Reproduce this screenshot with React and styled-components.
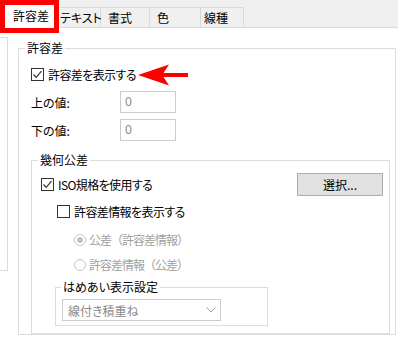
import React from "react";
import styled, { createGlobalStyle } from "styled-components";

const GlobalStyle = createGlobalStyle`
  html, body {
    margin: 0;
    padding: 0;
    background: #ffffff;
  }
  body {
    font-family: "Noto Sans CJK JP", "Noto Sans", sans-serif;
    font-size: 12px;
    font-feature-settings: "palt";
    color: #000000;
  }
`;

const Window = styled.div`
  width: 398px;
  height: 337px;
  overflow: hidden;
  background: #ffffff;
`;

const TabBar = styled.div`
  display: flex;
  align-items: flex-start;
  height: 27px;
  background: #f0f0f0;
  border-bottom: 1px solid #d9d9d9;
`;

const Tab = styled.div`
  box-sizing: border-box;
  width: ${(p) => p.$w}px;
  height: 21px;
  margin-top: 7px;
  padding-left: ${(p) => p.$pad}px;
  border-top: 1px solid #d9d9d9;
  border-right: 1px solid #d9d9d9;
  line-height: 19px;
  white-space: nowrap;
`;

const ActiveTab = styled.div`
  position: relative;
  z-index: 2;
  box-sizing: border-box;
  width: 59px;
  height: 33px;
  padding-left: 8px;
  border: 5px solid #ff0000;
  background: #ffffff;
  line-height: 22px;
`;

const Content = styled.div`
  display: flex;
  align-items: flex-start;
  padding: 9px 2px 0 0;
`;

const SideBox = styled.div`
  box-sizing: border-box;
  flex: none;
  width: 8px;
  height: 234px;
  border: 1px solid #dcdcdc;
  border-left: none;
`;

const GroupBox = styled.section`
  box-sizing: border-box;
  flex: ${(p) => (p.$w ? "none" : "1")};
  width: ${(p) => (p.$w ? `${p.$w}px` : "auto")};
  margin: ${(p) => p.$mt || 0}px 0 0 ${(p) => p.$ml || 0}px;
`;

const GroupHead = styled.div`
  display: flex;
  height: 14px;
  line-height: 14px;

  &::before,
  &::after {
    content: "";
    box-sizing: border-box;
    align-self: flex-end;
    height: 7px;
    border-top: 1px solid #dcdcdc;
  }
  &::before {
    width: ${(p) => p.$lead}px;
    border-left: 1px solid #dcdcdc;
  }
  &::after {
    flex: 1;
    border-right: 1px solid #dcdcdc;
  }
`;

const GroupTitle = styled.span`
  padding: 0 2px;
  white-space: nowrap;
`;

const GroupBody = styled.div`
  padding: ${(p) => p.$pad};
  border: 1px solid #dcdcdc;
  border-top: none;
`;

const CheckRow = styled.label`
  display: flex;
  align-items: center;
  gap: 4px;
  height: 17px;
  margin-top: ${(p) => p.$mt || 0}px;
  margin-left: ${(p) => p.$indent || 0}px;
  line-height: 17px;
  letter-spacing: -0.6px;
  white-space: nowrap;
`;

const Box = styled.span`
  box-sizing: border-box;
  display: flex;
  align-items: center;
  justify-content: center;
  width: 13px;
  height: 13px;
  border: 1px solid #333333;
  background: #ffffff;
  flex: none;
`;

const Arrow = styled.svg`
  flex: none;
  margin-left: -2px;
  margin-top: 1px;
`;

const ValueRow = styled.div`
  display: flex;
  align-items: center;
  height: 22px;
  margin-top: ${(p) => p.$mt}px;
`;

const ValueLabel = styled.span`
  width: 89px;
`;

const ValueInput = styled.div`
  box-sizing: border-box;
  width: 56px;
  height: 22px;
  padding-left: 4px;
  border: 1px solid #cccccc;
  color: #8a8a8a;
  font-family: "Noto Sans", sans-serif;
  font-size: 12px;
  line-height: 20px;
`;

const SplitRow = styled.div`
  display: flex;
  align-items: center;
  justify-content: space-between;
  height: 23px;
`;

const Button = styled.button`
  box-sizing: border-box;
  width: 86px;
  height: 23px;
  padding: 0;
  border: 1px solid #adadad;
  background: #e1e1e1;
  color: #000000;
  font-family: inherit;
  font-size: 12px;
  font-feature-settings: "palt";
`;

const RadioRow = styled.div`
  display: flex;
  align-items: center;
  gap: 3px;
  height: 17px;
  margin-top: ${(p) => p.$mt}px;
  margin-left: 33px;
  color: #a0a0a0;
  font-feature-settings: normal;
  letter-spacing: -1px;
  white-space: nowrap;
`;

const Radio = styled.span`
  box-sizing: border-box;
  display: flex;
  align-items: center;
  justify-content: center;
  width: 12px;
  height: 12px;
  border: 1px solid #c4c4c4;
  border-radius: 50%;
  flex: none;

  &::after {
    content: "";
    display: ${(p) => (p.$on ? "block" : "none")};
    width: 6px;
    height: 6px;
    border-radius: 50%;
    background: #c4c4c4;
  }
`;

const Select = styled.div`
  box-sizing: border-box;
  display: flex;
  align-items: center;
  justify-content: space-between;
  width: 159px;
  height: 22px;
  padding: 0 4px 0 5px;
  border: 1px solid #cccccc;
  color: #8a8a8a;
`;

const Check = () => (
  <svg width="11" height="11" viewBox="0 0 11 11">
    <path d="M1.5 5.5 L4.2 8.3 L9.5 2.2" fill="none" stroke="#333" strokeWidth="1.2" />
  </svg>
);

const CheckBox = ({ checked }) => <Box>{checked && <Check />}</Box>;

const Group = ({ title, lead, w, mt, ml, pad, children }) => (
  <GroupBox $w={w} $mt={mt} $ml={ml}>
    <GroupHead $lead={lead}>
      <GroupTitle>{title}</GroupTitle>
    </GroupHead>
    <GroupBody $pad={pad}>{children}</GroupBody>
  </GroupBox>
);

const tabs = [
  { label: "テキスト", w: 42, pad: 1 },
  { label: "書式", w: 49, pad: 7 },
  { label: "色", w: 51, pad: 7 },
  { label: "線種", w: 43, pad: 3 },
];

const App = () => {
  return (
    <Window>
      <GlobalStyle />
      <TabBar>
        <ActiveTab>許容差</ActiveTab>
        {tabs.map((t) => (
          <Tab key={t.label} $w={t.w} $pad={t.pad}>
            {t.label}
          </Tab>
        ))}
      </TabBar>
      <Content>
        <SideBox />
        <Group title="許容差" lead={7} mt={4} ml={10} pad="11px 5px 0 12px">
          <CheckRow>
            <CheckBox checked />
            許容差を表示する
            <Arrow width="50" height="24" viewBox="0 0 50 24">
              <path d="M0 12 L31 1.5 L25.5 10 L50 10 L50 14 L25.5 14 L31 22.5 Z" fill="#ff0000" />
            </Arrow>
          </CheckRow>
          <ValueRow $mt={8}>
            <ValueLabel>上の値:</ValueLabel>
            <ValueInput>0</ValueInput>
          </ValueRow>
          <ValueRow $mt={6}>
            <ValueLabel>下の値:</ValueLabel>
            <ValueInput>0</ValueInput>
          </ValueRow>
          <Group title="幾何公差" lead={7} mt={12} pad="6px 6px 7px 9px">
            <SplitRow>
              <CheckRow>
                <CheckBox checked />
                ISO規格を使用する
              </CheckRow>
              <Button>選択...</Button>
            </SplitRow>
            <CheckRow $mt={7} $indent={16}>
              <CheckBox />
              許容差情報を表示する
            </CheckRow>
            <RadioRow $mt={11}>
              <Radio $on />
              公差（許容差情報）
            </RadioRow>
            <RadioRow $mt={8}>
              <Radio />
              許容差情報（公差）
            </RadioRow>
            <Group title="はめあい表示設定" lead={6} w={213} mt={7} ml={14} pad="5px 0 4px 6px">
              <Select>
                線付き積重ね
                <svg width="10" height="6" viewBox="0 0 10 6">
                  <path d="M0.5 0.5 L5 5 L9.5 0.5" fill="none" stroke="#a0a0a0" strokeWidth="1" />
                </svg>
              </Select>
            </Group>
          </Group>
        </Group>
      </Content>
    </Window>
  );
};

export default App;
